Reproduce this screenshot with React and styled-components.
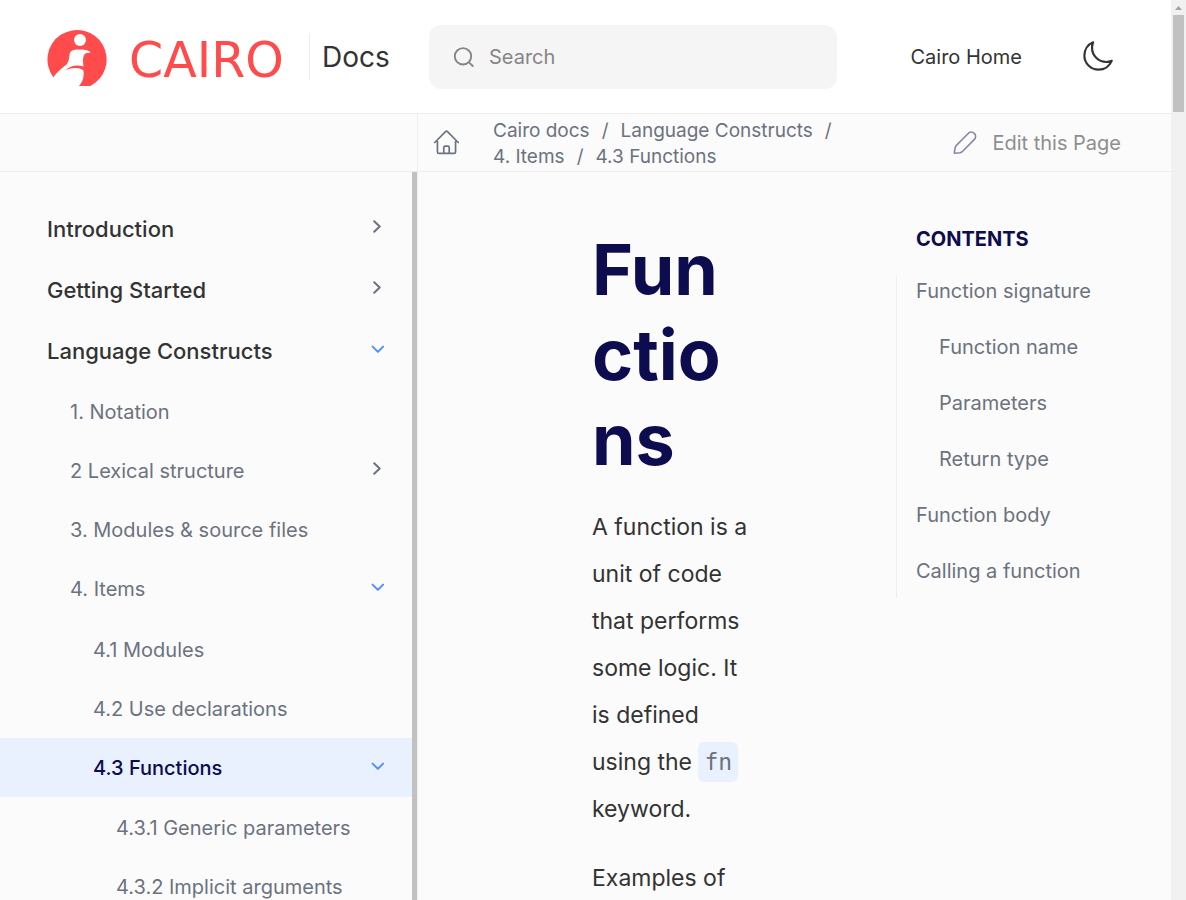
import React from "react";
import styled, { createGlobalStyle, css } from "styled-components";

const Global = createGlobalStyle`
  *, *::before, *::after { box-sizing: border-box; }
  body { margin: 0; background: #fbfbfb; color: #333; font-family: Inter, "Liberation Sans", sans-serif; }
  a { color: inherit; text-decoration: none; }
  ul, ol { list-style: none; margin: 0; padding: 0; }
  button { border: 0; background: none; padding: 0; font: inherit; color: inherit; cursor: pointer; }
  svg { display: block; flex: none; }
`;

const Window = styled.div`
  display: flex;
  height: 100vh;
  overflow: hidden;
`;

const Page = styled.div`
  flex: 1;
  min-width: 0;
  display: flex;
  flex-direction: column;
`;

const Header = styled.header`
  display: flex;
  align-items: center;
  height: 114px;
  flex: none;
  background: #fff;
  border-bottom: 1px solid #eee;
`;

const Brand = styled.div`
  display: flex;
  align-items: center;
  width: 429px;
  flex: none;
  padding-left: 47px;
`;

const LogoLink = styled.a`
  display: flex;
  align-items: center;
  gap: 22px;
  width: 262px;
  color: #ff4b4b;
`;

const Wordmark = styled.span`
  padding-top: 8px;
  font-family: "DejaVu Sans", sans-serif;
  font-size: 49px;
  line-height: 56px;
`;

const DocsLink = styled.a`
  border-left: 1px solid #eee;
  padding-left: 12px;
  font-size: 28px;
  line-height: 46px;
`;

const SearchBox = styled.label`
  display: flex;
  align-items: center;
  gap: 15px;
  flex: 0 1 408px;
  min-width: 0;
  height: 64px;
  padding: 0 24px;
  border-radius: 12px;
  background: #f5f5f5;
  color: #858585;
`;

const SearchInput = styled.input`
  flex: 1;
  min-width: 0;
  border: 0;
  outline: 0;
  padding: 0;
  background: none;
  font: 20px/28px Inter, sans-serif;
  color: #333;
  &::placeholder { color: #858585; opacity: 1; }
`;

const HeaderNav = styled.nav`
  display: flex;
  align-items: center;
  gap: 58px;
  margin-left: auto;
  padding-right: 56px;
  font-size: 20px;
  white-space: nowrap;
`;

const Toolbar = styled.div`
  display: flex;
  align-items: center;
  flex: none;
  height: 58px;
  border-bottom: 1px solid #eee;
  color: #6b7280;
  font-size: 19px;
`;

const ToolbarStart = styled.div`
  width: 418px;
  height: 100%;
  flex: none;
  border-right: 1px solid #eee;
`;

const HomeLink = styled.a`
  padding: 0 32px 0 14px;
`;

const Crumbs = styled.ol`
  display: flex;
  flex-wrap: wrap;
  flex: 0 1 360px;
  padding-top: 2px;
  line-height: 26px;
`;

const Crumb = styled.li`
  &:not(:last-child)::after {
    content: "/";
    margin: 0 12px;
  }
`;

const EditLink = styled.a`
  display: flex;
  align-items: center;
  gap: 14px;
  margin-left: auto;
  padding: 1px 50px 0 0;
  color: #8e8e8e;
  font-size: 20px;
  white-space: nowrap;
  svg { color: #8787a8; }
`;

const Body = styled.div`
  display: flex;
  flex: 1;
  min-height: 0;
`;

const Sidebar = styled.nav`
  width: 418px;
  flex: none;
  overflow: hidden;
  padding-top: 26px;
  border-right: 1px solid #eee;
  box-shadow: inset -5px 0 #c1c1c1;
`;

const SubList = styled.ul`
  padding-top: ${(p) => (p.$level === 2 ? 2 : 1)}px;
`;

const NavRow = styled.div`
  display: flex;
  align-items: center;
  justify-content: space-between;
  height: 59px;
  margin-right: 5px;
  padding: 0 27px 0 ${(p) => 47 + p.$level * 23}px;
  font-size: 20px;
  color: #6b7280;
  ${(p) =>
    p.$level === 0 &&
    css`
      height: 61px;
      font-size: 22px;
      font-weight: 500;
      color: #333;
    `}
  ${(p) =>
    p.$active &&
    css`
      background: #e9f1ff;
      color: #0c0c4f;
      font-weight: 500;
    `}
`;

const Toggle = styled.button`
  width: 16px;
  height: 16px;
  display: grid;
  place-items: center;
  margin-bottom: 4px;
  color: ${(p) => (p.$open ? "#5290ff" : "#6b7280")};
`;

const Article = styled.main`
  flex: 1;
  min-width: 0;
  overflow: hidden;
  padding: 55px 147px 0 174px;
`;

const Title = styled.h1`
  margin: 0 0 22px;
  font-size: 70px;
  line-height: 85px;
  font-weight: 700;
  color: #0c0c4f;
  overflow-wrap: break-word;
`;

const Paragraph = styled.p`
  margin: 0 0 22px;
  font-size: 23px;
  line-height: 47px;
`;

const Code = styled.code`
  display: inline-block;
  padding: 6px;
  border-radius: 6px;
  background: #e9f1ff;
  color: #6b7280;
  font: 23px/28px "DejaVu Sans Mono", monospace;
`;

const Contents = styled.aside`
  width: 275px;
  flex: none;
  padding-top: 53px;
`;

const ContentsTitle = styled.h2`
  margin: 0 0 23px 20px;
  font-size: 20px;
  line-height: 28px;
  font-weight: 700;
  color: #0c0c4f;
`;

const ContentsList = styled.ul`
  display: grid;
  gap: 26px;
  height: 322px;
  align-content: start;
  border-left: 1px solid #eee;
`;

const ContentsItem = styled.li`
  padding-left: ${(p) => (p.$nested ? 42 : 19)}px;
  font-size: 20px;
  line-height: 30px;
  color: #6b7280;
`;

const ScrollTrack = styled.div`
  width: 15px;
  flex: none;
  display: flex;
  flex-direction: column;
  align-items: center;
  gap: 5px;
  padding-top: 6px;
  background: #f1f1f1;
  color: #a3a3a3;
`;

const ScrollThumb = styled.div`
  width: 11px;
  height: 97px;
  background: #c1c1c1;
`;

const stroke = { fill: "none", stroke: "currentColor", strokeLinecap: "round", strokeLinejoin: "round" };

const LogoMark = () => (
  <svg width="60" height="59" viewBox="0 -2 60 59" aria-hidden="true">
    <path
      fill="currentColor"
      d="M6.3 48.2A29.6 29.6 0 1 1 43.3 57H32C36 52.500 37.300 48 36.400 41.400C32 38.200 25 38.500 18.500 41.200C23 37 29 35.300 36.500 37.400C35.700 32 35.600 26.500 38.500 24.500C40 23.600 41.600 23.700 43.400 23.900C43 21.300 37.500 20.400 33 20.500C28 20.200 23.700 20.900 22.800 24.500C22 28.500 22.200 31.500 19.900 35.200C14.500 39 9.800 43.500 6.300 48.200Z"
    />
    <circle cx="33" cy="11" r="6" fill="#fff" />
  </svg>
);

const SearchIcon = () => (
  <svg width="21" height="20" viewBox="0 0 21 20" {...stroke} strokeWidth="1.9" aria-hidden="true">
    <circle cx="10" cy="9.300" r="8.200" />
    <path d="M16 15.300L19.700 19" />
  </svg>
);

const MoonIcon = () => (
  <svg width="35" height="35" viewBox="0 0 24 24" {...stroke} strokeWidth="1.5" aria-hidden="true">
    <path d="M21.752 15.002A9.72 9.72 0 0 1 18 15.75c-5.385 0-9.75-4.365-9.75-9.75 0-1.33.266-2.597.748-3.752A9.753 9.753 0 0 0 3 11.25C3 16.635 7.365 21 12.75 21a9.753 9.753 0 0 0 9.002-5.998Z" />
  </svg>
);

const HomeIcon = () => (
  <svg width="29" height="29" viewBox="0 0 24 24" {...stroke} strokeWidth="1.4" aria-hidden="true">
    <path d="m2.25 12 8.954-8.955c.44-.439 1.152-.439 1.591 0L21.75 12M4.5 9.75v10.125c0 .621.504 1.125 1.125 1.125H9.75v-4.875c0-.621.504-1.125 1.125-1.125h2.25c.621 0 1.125.504 1.125 1.125V21h4.125c.621 0 1.125-.504 1.125-1.125V9.75M8.25 21h8.25" />
  </svg>
);

const PencilIcon = () => (
  <svg width="25" height="24" viewBox="0 0 25 24" {...stroke} strokeWidth="1.6" aria-hidden="true">
    <path d="M15.500 2.200L3.600 14.100C2.800 14.900 2.300 16 2.200 17L1.300 21.400C1.200 22 1.600 22.400 2.200 22.300L7 21.700C8.100 21.500 9 20.900 9.700 20.200L21.400 8.400C23 6.700 23 4 21.300 2.400C19.600.800 17.200.700 15.500 2.200Z" />
  </svg>
);

const Chevron = ({ open }) => (
  <svg width="14" height="14" viewBox="0 0 14 14" {...stroke} strokeWidth="2" aria-hidden="true">
    <path d={open ? "M2.600 4.600L7.900 9.900L13.100 4.600" : "M4.200 1.200L9.700 6.500L4.200 11.700"} />
  </svg>
);

const TREE = [
  { label: "Introduction", open: false },
  { label: "Getting Started", open: false },
  {
    label: "Language Constructs",
    open: true,
    items: [
      { label: "1. Notation" },
      { label: "2 Lexical structure", open: false },
      { label: "3. Modules & source files" },
      {
        label: "4. Items",
        open: true,
        items: [
          { label: "4.1 Modules" },
          { label: "4.2 Use declarations" },
          {
            label: "4.3 Functions",
            open: true,
            active: true,
            items: [{ label: "4.3.1 Generic parameters" }, { label: "4.3.2 Implicit arguments" }],
          },
        ],
      },
    ],
  },
];

const CONTENTS = [
  ["Function signature", false],
  ["Function name", true],
  ["Parameters", true],
  ["Return type", true],
  ["Function body", false],
  ["Calling a function", false],
];

function NavItem({ item, level }) {
  return (
    <li>
      <NavRow $level={level} $active={item.active}>
        <a href="#">{item.label}</a>
        {item.open !== undefined && (
          <Toggle type="button" $open={item.open} aria-expanded={item.open} aria-label={`Toggle ${item.label}`}>
            <Chevron open={item.open} />
          </Toggle>
        )}
      </NavRow>
      {item.items && (
        <SubList $level={level + 1}>
          {item.items.map((child) => (
            <NavItem key={child.label} item={child} level={level + 1} />
          ))}
        </SubList>
      )}
    </li>
  );
}

export default function App() {
  return (
    <Window>
      <Global />
      <Page>
        <Header>
          <Brand>
            <LogoLink href="#">
              <LogoMark />
              <Wordmark>CAIRO</Wordmark>
            </LogoLink>
            <DocsLink href="#">Docs</DocsLink>
          </Brand>
          <SearchBox>
            <SearchIcon />
            <SearchInput type="text" placeholder="Search" aria-label="Search" />
          </SearchBox>
          <HeaderNav>
            <a href="#">Cairo Home</a>
            <button type="button" aria-label="Dark mode">
              <MoonIcon />
            </button>
          </HeaderNav>
        </Header>
        <Toolbar>
          <ToolbarStart />
          <HomeLink href="#" aria-label="Home">
            <HomeIcon />
          </HomeLink>
          <Crumbs>
            {["Cairo docs", "Language Constructs", "4. Items", "4.3 Functions"].map((name) => (
              <Crumb key={name}>
                <a href="#">{name}</a>
              </Crumb>
            ))}
          </Crumbs>
          <EditLink href="#">
            <PencilIcon />
            Edit this Page
          </EditLink>
        </Toolbar>
        <Body>
          <Sidebar>
            <ul>
              {TREE.map((item) => (
                <NavItem key={item.label} item={item} level={0} />
              ))}
            </ul>
          </Sidebar>
          <Article>
            <Title>Functions</Title>
            <Paragraph>
              A function is a unit of code that performs some logic. It is defined using the <Code>fn</Code> keyword.
            </Paragraph>
            <Paragraph>Examples of</Paragraph>
          </Article>
          <Contents>
            <ContentsTitle>CONTENTS</ContentsTitle>
            <ContentsList>
              {CONTENTS.map(([label, nested]) => (
                <ContentsItem key={label} $nested={nested}>
                  <a href="#">{label}</a>
                </ContentsItem>
              ))}
            </ContentsList>
          </Contents>
        </Body>
      </Page>
      <ScrollTrack aria-hidden="true">
        <svg width="7" height="4" viewBox="0 0 7 4">
          <path d="M3.500 0L7 4H0Z" fill="currentColor" />
        </svg>
        <ScrollThumb />
      </ScrollTrack>
    </Window>
  );
}
